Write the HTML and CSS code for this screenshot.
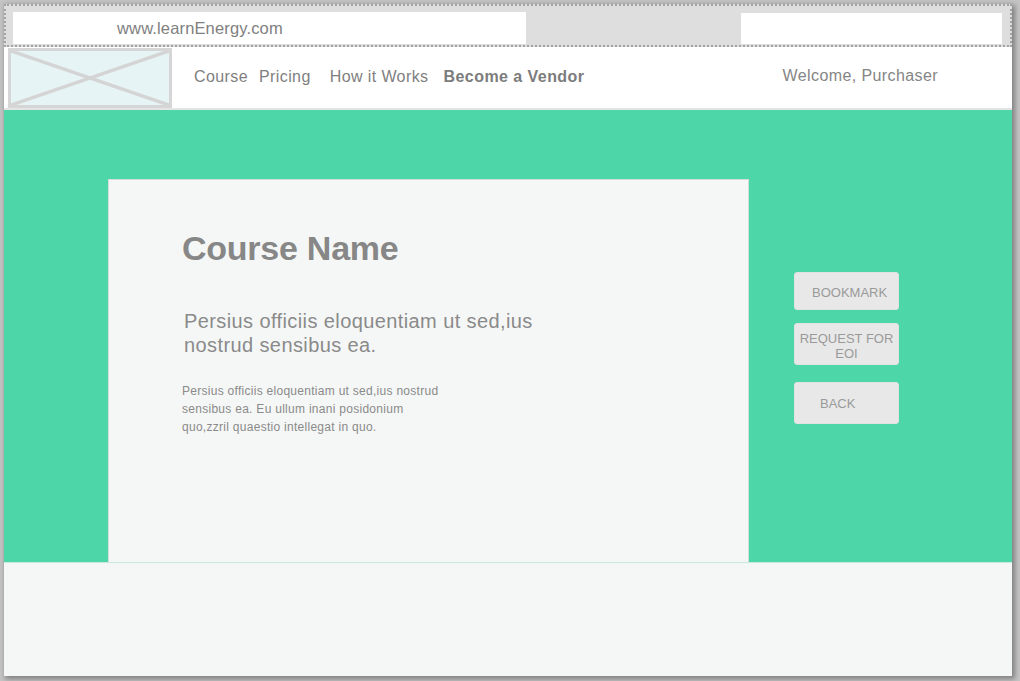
FILE: index.html
```html
<!DOCTYPE html>
<html>
<head>
<meta charset="utf-8">
<title>learnEnergy - Course</title>
<link rel="stylesheet" href="styles.css">
</head>
<body>
<div class="frame">
  <div class="topbar">
    <div class="url">www.learnEnergy.com</div>
    <div class="search"></div>
  </div>
  <div class="nav">
    <div class="logo">
      <svg class="logo-x" viewBox="0 0 100 100" preserveAspectRatio="none">
        <line x1="0" y1="0" x2="100" y2="100" vector-effect="non-scaling-stroke"/>
        <line x1="100" y1="0" x2="0" y2="100" vector-effect="non-scaling-stroke"/>
      </svg>
    </div>
    <a class="nav-link l-course">Course</a>
    <a class="nav-link l-pricing">Pricing</a>
    <a class="nav-link l-how">How it Works</a>
    <a class="nav-link l-vendor">Become a Vendor</a>
    <span class="welcome">Welcome, Purchaser</span>
  </div>
  <div class="hero">
    <div class="card">
      <h1 class="title">Course Name</h1>
      <p class="lead">Persius officiis eloquentiam ut sed,ius nostrud sensibus ea.</p>
      <p class="body-text">Persius officiis eloquentiam ut sed,ius nostrud<br>sensibus ea. Eu ullum inani posidonium<br>quo,zzril quaestio intellegat in quo.</p>
    </div>
    <div class="actions">
      <button class="btn btn-bookmark">BOOKMARK</button>
      <button class="btn btn-request">REQUEST FOR<br>EOI</button>
      <button class="btn btn-back">BACK</button>
    </div>
  </div>
  <div class="footer"></div>
</div>
</body>
</html>
```

FILE: styles.css
```css
html, body {
  margin: 0;
  padding: 0;
}
body {
  background: #c4c4c4;
  width: 1020px;
  height: 681px;
  overflow: hidden;
  font-family: "Liberation Sans", Arial, sans-serif;
}
.frame {
  margin: 4px 0 0 4px;
  width: 1008px;
  height: 672px;
  display: flex;
  flex-direction: column;
  background: #f5f7f6;
  box-shadow: 2px 2px 5px 1px rgba(0, 0, 0, 0.35);
}
.topbar {
  box-sizing: border-box;
  height: 43px;
  flex: none;
  border: 2px dotted #a3a3a3;
  background: #dedede;
  padding: 6px 8px 1px 7px;
  display: flex;
  align-items: stretch;
}
.url {
  width: 513px;
  background: #ffffff;
  color: #808080;
  font-size: 16.5px;
  letter-spacing: 0.15px;
  line-height: 32px;
  padding-left: 104px;
  box-sizing: border-box;
}
.search {
  width: 261px;
  margin-left: auto;
  margin-top: 1px;
  background: #ffffff;
}
.nav {
  box-sizing: border-box;
  height: 63px;
  flex: none;
  background: #ffffff;
  border-bottom: 2px solid #e4e4e4;
  display: flex;
  align-items: center;
  font-size: 16px;
  letter-spacing: 0.4px;
  color: #808080;
}
.logo {
  box-sizing: border-box;
  width: 164px;
  height: 60px;
  margin: 1px 0 0 4px;
  align-self: flex-start;
  background: #e6f4f5;
  border: 3px solid #d6d6d6;
}
.logo-x {
  display: block;
  width: 100%;
  height: 100%;
}
.logo-x line {
  stroke: #d4d4d4;
  stroke-width: 3.5;
}
.nav-link {
  color: #808080;
  padding-bottom: 2px;
}
.l-course { margin-left: 22px; }
.l-pricing { margin-left: 11px; }
.l-how { margin-left: 19px; }
.l-vendor { margin-left: 15px; font-weight: bold; color: #7c7c7c; letter-spacing: 0.45px; }
.welcome {
  margin-left: auto;
  margin-right: 74px;
  padding-bottom: 4px;
  color: #858585;
}
.hero {
  height: 453px;
  flex: none;
  box-sizing: border-box;
  background: #4dd6a8;
  padding: 69px 0 0 104px;
  display: flex;
  align-items: flex-start;
  border-bottom: 1px solid #c9e9de;
}
.card {
  box-sizing: border-box;
  width: 641px;
  height: 383px;
  background: #f5f7f6;
  border: 1px solid #d6dcd9;
  border-bottom: none;
  padding: 48px 0 0 73px;
  color: #888888;
}
.title {
  margin: 0;
  font-size: 34px;
  letter-spacing: -0.25px;
  line-height: 40px;
  font-weight: bold;
  color: #878787;
}
.lead {
  margin: 41px 0 0 2px;
  width: 400px;
  font-size: 20px;
  letter-spacing: 0.4px;
  line-height: 24px;
  color: #8a8a8a;
}
.body-text {
  margin: 25px 0 0 0;
  font-size: 12px;
  line-height: 18px;
  letter-spacing: 0.28px;
  color: #8a8a8a;
}
.actions {
  margin: 93px 0 0 45px;
  display: flex;
  flex-direction: column;
}
.btn {
  box-sizing: border-box;
  width: 105px;
  border: 1px solid #e2e2e2;
  border-radius: 3px;
  background: #e8e8e8;
  color: #9a9a9a;
  font-family: "Liberation Sans", Arial, sans-serif;
  font-size: 13px;
  line-height: 15px;
  padding: 0;
  cursor: pointer;
}
.btn-bookmark {
  height: 38px;
  text-align: left;
  padding-left: 17px;
  padding-top: 3px;
}
.btn-request {
  height: 42px;
  margin-top: 13px;
  text-align: center;
  padding-top: 3px;
}
.btn-back {
  height: 42px;
  margin-top: 17px;
  text-align: left;
  padding-left: 25px;
}
.footer {
  flex: 1;
  background: #f5f7f6;
}
```
